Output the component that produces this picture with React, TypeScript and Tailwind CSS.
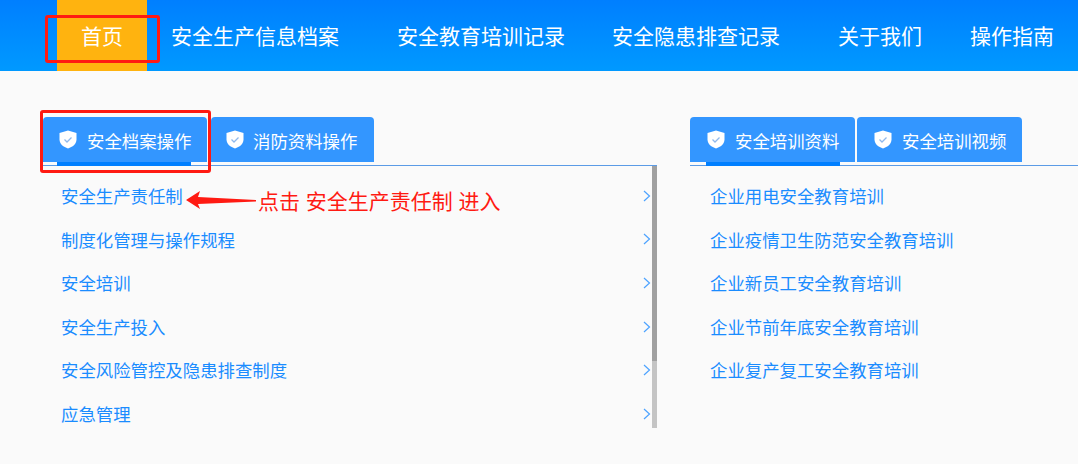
import React from 'react';

const navItems = [
  { label: '安全生产信息档案', className: 'ml-6 w-[168px]' },
  { label: '安全教育培训记录', className: 'ml-[58px] w-[168px]' },
  { label: '安全隐患排查记录', className: 'ml-[47px] w-[168px]' },
  { label: '关于我们', className: 'ml-[58px] w-[84px]' },
  { label: '操作指南', className: 'ml-12 w-[84px]' },
];

const archiveRows = ['安全生产责任制', '制度化管理与操作规程', '安全培训', '安全生产投入', '安全风险管控及隐患排查制度', '应急管理'];
const trainingRows = ['企业用电安全教育培训', '企业疫情卫生防范安全教育培训', '企业新员工安全教育培训', '企业节前年底安全教育培训', '企业复产复工安全教育培训'];

const ShieldIcon = () => (
  <svg width="18" height="19" viewBox="0 0 18 19" className="shrink-0">
    <path d="M9 0.5 L17.5 3 V9.5 C17.5 14 13.5 17 9 18.5 C4.5 17 0.5 14 0.5 9.5 V3 Z" fill="#ffffff" />
    <path d="M5.5 9.5 L8 12 L12.5 7.5" fill="none" stroke="#8fb8ec" strokeWidth="1.3" />
  </svg>
);

const Tab = ({ label, barClass, className, labelClass }: { label: string; barClass?: string; className: string; labelClass: string }) => (
  <div className={`relative flex h-[45px] items-center rounded-t-[4px] bg-[#3396ff] text-white ${className}`}>
    <ShieldIcon />
    <span className={`mt-[3px] whitespace-nowrap ${labelClass}`}>{label}</span>
    {barClass && <div className={`absolute bottom-[-4px] h-1 w-[134px] bg-[#007fff] ${barClass}`} />}
  </div>
);

const Chevron = () => (
  <svg width="8" height="12" viewBox="0 0 8 12" className="shrink-0">
    <path d="M1 1 L6.5 6 L1 11" fill="none" stroke="#4da3ff" strokeWidth="1.2" />
  </svg>
);

export default function App() {
  return (
    <div
      className="relative h-[464px] w-[1078px] overflow-hidden bg-[#fafafa]"
      style={{ fontFamily: '"Noto Sans CJK SC", "Noto Sans", sans-serif' }}
    >
      {/* Nav */}
      <header className="flex h-[71px] bg-gradient-to-b from-[#007fff] to-[#0099ff] pl-[57px] text-[21px] text-white">
        <div className="flex w-[90px] items-center justify-center bg-[#ffb30f]">首页</div>
        {navItems.map((item) => (
          <div key={item.label} className={`flex items-center whitespace-nowrap ${item.className}`}>
            {item.label}
          </div>
        ))}
      </header>

      <main className="flex pl-[43px] pt-[46px] text-[17.4px] leading-none">
        {/* Archive panel */}
        <section className="w-[614px]">
          <div className="flex gap-1 border-b border-[#5b9be6] pb-[3px]">
            <Tab label="安全档案操作" barClass="left-[14px]" className="w-[164px] pl-4" labelClass="ml-[10px]" />
            <Tab label="消防资料操作" className="w-[163px] pl-[15px]" labelClass="ml-[9px]" />
          </div>
          <div className="flex h-[262px]">
            <ul className="w-[609px] pl-[18px] pr-[1px] pt-2 text-[#1a8cff]">
              {archiveRows.map((row) => (
                <li key={row} className="flex h-[43.6px] items-center justify-between">
                  <span>{row}</span>
                  <Chevron />
                </li>
              ))}
            </ul>
            <div className="flex w-[5px] flex-col bg-[#c4c4c4]">
              <div className="h-[195px] bg-[#a0a0a0]" />
            </div>
          </div>
        </section>

        {/* Training panel */}
        <section className="ml-[33px] flex-1">
          <div className="flex gap-[2px] border-b border-[#5b9be6] pb-[3px]">
            <Tab label="安全培训资料" barClass="left-4" className="w-[165px] pl-[17px]" labelClass="ml-[10px]" />
            <Tab label="安全培训视频" className="w-[165px] pl-[17px]" labelClass="ml-[10px]" />
          </div>
          <ul className="pl-5 pt-2 text-[#1a8cff]">
            {trainingRows.map((row) => (
              <li key={row} className="flex h-[43.6px] items-center">
                {row}
              </li>
            ))}
          </ul>
        </section>
      </main>

      {/* Annotations */}
      <div className="absolute left-[45px] top-[15px] h-[48px] w-[115px] rounded-[3px] border-[3px] border-[#ff1a12]" />
      <div className="absolute left-[40px] top-[110px] h-[63px] w-[171px] rounded-[3px] border-[3px] border-[#ff1a12]" />
      <svg width="72" height="20" viewBox="0 0 72 20" className="absolute left-[185px] top-[190px]">
        <path d="M1 10 L15 1 L13 7 L71 10 L71 11.5 L13 14 L15 19 Z" fill="#ff1a12" />
      </svg>
      <div className="absolute left-[258px] top-[186px] whitespace-nowrap text-[21px] leading-[28px] text-[#ff1a12] [word-spacing:1px]">
        点击 安全生产责任制 进入
      </div>
    </div>
  );
}
